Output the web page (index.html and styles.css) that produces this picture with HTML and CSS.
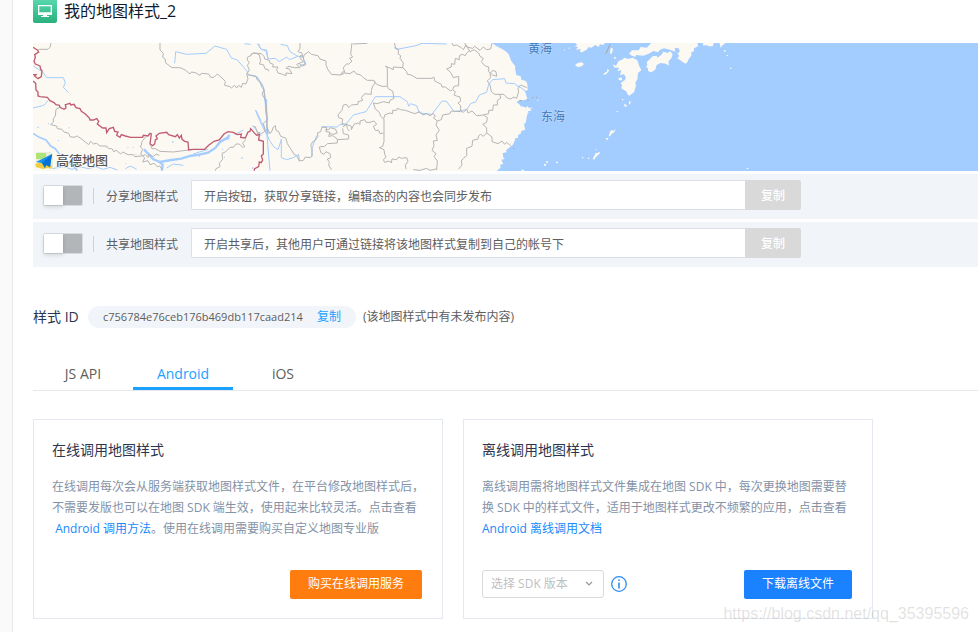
FILE: index.html
```html
<!DOCTYPE html>
<html lang="zh-CN">
<head>
<meta charset="utf-8">
<title>我的地图样式_2</title>
<link rel="stylesheet" href="styles.css">
</head>
<body>
<div class="page">
  <aside class="rail"></aside>
  <main class="main">
    <header class="title">
      <svg class="title-icon" width="24" height="24" viewBox="0 0 24 24" aria-hidden="true">
        <defs><linearGradient id="green" x1="0" y1="0" x2="0" y2="1"><stop offset="0" stop-color="#58d8b0"/><stop offset="1" stop-color="#2bb07c"/></linearGradient></defs>
        <rect width="24" height="24" rx="2" fill="url(#green)"/>
        <path d="M5 6h14v10h-5v1h2v1H8v-1h2v-1H5zM6.300 7.300v6h11.400v-6z" fill="#fff" fill-rule="evenodd"/>
      </svg>
      <h1>我的地图样式_2</h1>
    </header>

    <div class="map">
      <svg class="map-canvas" width="100%" height="128" role="img" aria-label="地图">
        <!-- land -->
        <g transform="translate(457 -8) scale(.33333)" class="land">
          <path d="M-1400 20L6 24 20 34 32 40 45 47 55 56 58 62 62 74 68 84 75 92 76 106 79 120 92 124 94 134 108 138 112 146 113 166 104 168 108 178 112 192 100 196 84 197 80 202 88 208 92 214 105 216 108 228 114 232 110 246 108 262 102 268 106 284 94 288 92 296 84 300 84 308 76 310 74 318 68 330 60 336 48 346 50 352 38 354 40 368 44 372 34 374 40 386 30 390 32 398 24 404 18 412H-1400z"/>
          <path d="M105 220L112 214 118 220 128 216 120 224 126 228 114 228 116 234 108 232z"/>
          <path d="M417 56L426 46 446 46 452 36 470 38 484 24 484 20H622L624 34 612 40 612 48 604 52 604 62 596 72 592 82 586 86 574 78 562 70 568 62 562 56 570 48 564 38 554 40 556 50 540 44 522 40 510 44 504 52 490 48 476 56 460 62 438 60 436 66 426 62z"/>
          <path d="M470 82L488 64 500 62 502 68 514 60 520 50 534 54 540 48 548 58 544 70 536 78 536 92 528 86 512 84 500 90 496 104 490 108 484 112 474 108 474 100 468 96 472 90z"/>
          <path d="M368 88L378 92 386 78 396 74 404 68 414 72 428 68 442 76 448 94 454 106 444 114 442 134 436 142 438 152 432 172 418 182 412 178 410 170 394 160 396 150 392 144 404 136 408 128 402 118 390 120 394 106 382 108 388 98 374 98z"/>
          <path d="M254 22H346L340 30 330 28 326 36 316 30 304 38 296 36 290 44 276 52 270 50 272 42 258 44 264 36 254 34 262 30zM255 90L263 84 275 82 282 87 276 93 264 97zM340 118l6-6 4-1 2-9 6 4-8 10-8 4zM360 290l6-6 4 4 8-6-6 10-8 6-4 6-4 0zM348 309h7l-2 5h-5zM308 372l6-12 3-6 6 0 4-4 3 4-8 8-6 6-3 6zM402 206l8 4v5h-6zM418 198l5 2-3 8h-4zM380 228h4v3h-4zM162 387h6v5h-6zM168 379h6v4h-6zM198 380h6v4h-6zM94 404h8v4h-8zM638 22h34l-4 12h-12l-8-4-8 2zM688 22h22l-12 8-6 8zM702 46h5v4h-5zM710 60h4v3h-4zM720 98h4v4h-4zM770 399h5v3h-5zM396 192h4v4h-4zM362 40l6-2v10l-4 10-4-4zM372 66h5v5h-5zM386 128h10v8h-10zM276 366h4v4h-4zM294 368h4v4h-4zM316 342h3v3h-3zM236 38h3v3h-3zM222 44h3v3h-3zM142 194h3v4h-3z"/>
        </g>
        <!-- rivers -->
        <g class="river" transform="translate(-33 -43) scale(.33333)">
          <path d="M99 197L112 206 128 216 140 233 190 233 196 248 190 262 206 278M99 324L124 318 134 314 144 302M524 190L527 155 560 163 618 160 645 138 680 148 694 174 712 180 740 212 745 224 768 228 790 262 798 330 804 400M734 131L752 133M772 131L784 148 800 150 804 176M766 330L780 364 800 404M757 376L784 408"/>
          <path class="mid" d="M99 400L118 412 138 420 152 438 166 446 186 474 200 484M200 484L220 498 232 512"/>
          <path class="wide" d="M486 512L488 494 478 486 514 480 544 476 570 468 598 464 624 458 646 444 660 426 684 412 688 404M688 414L668 420M480 486L460 478 432 448"/>
          <path d="M156 506L190 500 216 508 240 500 266 506 286 500 310 508 330 502 352 510M376 506L392 498 410 508M500 504L520 492 550 496M580 462L624 448M730 390L704 404"/>
        </g>
        <g class="river" transform="translate(217 -8) scale(.33333)">
          <path d="M26 26L32 42 48 48 54 72 76 70 88 80 110 66 118 74 144 64M92 28L112 32 120 50 140 62 160 68 164 88 152 90M432 38L446 42 498 32 516 25 590 27M215 275L262 276 270 268 286 270 310 240 348 230 376 185 450 185 472 200 476 214 482 206 500 212 508 234 546 238 576 198 590 199 612 230 650 224 662 206 678 200 688 180 710 172 716 148 728 134 764 131 768 144 794 146 806 156"/>
          <path d="M18 226L34 260 48 290 58 316 72 336 84 344 92 320 94 312 94 368 110 374 130 368 146 358 148 378M50 192L50 290 60 407M20 124L38 150 44 168M200 302L186 340 186 364M804 152L826 168"/>
        </g>
        <g class="speck" transform="translate(-33 -43) scale(.33333)">
          <path d="M112 380h4v4h-4zM144 370h3v3h-3zM206 382h3v3h-3zM174 420h3v3h-3zM198 396h3v3h-3zM284 428h3v3h-3zM316 440h3v3h-3zM382 442h3v3h-3zM406 462h3v3h-3zM398 440h3v3h-3zM376 490h3v3h-3zM516 424h4v4h-4zM596 466h4v4h-4zM672 470h3v3h-3zM724 472h4v4h-4zM756 502h4v4h-4zM666 446h3v3h-3zM450 418h3v3h-3z"/>
        </g>
        <!-- province borders -->
        <g class="border" transform="translate(-33 -43) scale(.33333)">
          <path d="M153 129L150 142 144 148 118 148 112 152M480 129L480 150 490 160 488 172 496 178 496 188 516 203 540 203 556 210 570 222 574 216 586 218 600 226 604 220 626 222 632 232 642 232 652 222 666 234 676 244 674 256 690 260 694 264 704 256 710 264 716 256 724 262 728 250 738 252 744 236 740 222 748 210 742 196 748 188 742 180 742 172 754 166 756 160 768 160 778 164 782 184 778 192 790 194 796 208 804 208 806 214"/>
          <path d="M180 321L168 328 166 348 160 356 160 366 152 374 170 378 172 386 186 388 192 396 206 400 210 410 222 412 232 408 246 418 256 426 266 434 272 424 280 432 290 430 300 438 320 438 326 446 336 446 342 456 348 450 362 462 368 456 384 464 400 464 404 470 424 468 436 464 444 472 448 462 460 470 468 462 478 466M438 410L426 424 424 436 420 438 428 448 422 462 434 474 428 486 444 482 450 494 462 490 472 500 480 498 486 510M452 436L456 446 466 446 480 454 520 456 566 450M738 418L728 430 734 440 728 442 718 432 708 432 700 442 690 442 676 456 666 460 668 478 658 490 660 500 648 506 646 512"/>
          <path d="M742 224L768 230 772 240 780 246 786 262 792 270 786 282 796 300 798 340 802 360 790 370 796 392 784 402 778 396 774 404 766 380 760 380"/>
        </g>
        <g class="border" transform="translate(217 -8) scale(.33333)">
          <path d="M0 62L10 54 34 56 42 64 44 72 58 76 60 84 70 88 68 96 84 96 80 104 84 114 98 118 108 122 108 114 126 116 118 102 108 100 114 94 134 98 150 98 140 88 160 80 150 70 152 60 158 66 156 54 144 50 150 40 150 24M150 86L152 94 166 90 166 82 160 72 162 60 176 50 184 58 204 62 210 72 228 78 228 90 234 104 244 118 272 120 278 110 284 112 280 98 290 86 296 88 306 78 298 70 308 66 302 58 304 40 306 24M310 27L352 25M272 120L284 114 300 116 312 108 318 116 332 120 340 128 352 136 370 136 380 148 396 154 412 154 416 162 428 168 432 190M372 136L376 142 368 154 364 166 364 178 344 176 334 188 338 196 324 200 324 208 304 210 296 218 290 208 280 210 276 226 264 240 266 248 278 252 276 266 290 268M432 190L420 196 418 204 400 200 382 206 370 204 376 222 388 232 392 244 402 252 402 280 402 320 398 334 388 338 402 344 404 358 408 366 400 374 404 382M412 154L412 98 406 94 418 98 430 104 430 96 460 98M433 24L438 42 446 44 444 56 452 62 450 70 460 84 458 97M458 97L470 110 472 118 484 120 500 130 546 130 552 126 554 138 574 148 576 156 586 156 602 168 608 164 616 170 612 180 622 184 630 186 632 198 624 204 632 212 632 228M608 164L612 154 626 152 626 124 610 128 602 112 590 102 604 96 604 86 614 88 616 70 628 74 628 62 636 58 646 62 650 54 660 46M606 24L610 32 620 30 634 38 640 44 648 30 660 50 672 44 686 54 690 64 700 70 694 80 704 92 716 96 716 110 728 120 740 124 738 110 728 106 720 116 722 128 712 138 720 150 724 170 734 178 750 178 762 178 770 188 782 192 792 186 800 190 806 170 804 160 812 150 830 158M644 24L650 36 668 40 674 34 690 46 700 36 710 44 722 42 726 24M750 180L752 190 742 196 742 210 730 210 728 226 716 226 716 236 700 240 712 248 710 262 698 268 710 278 710 294 726 306 726 320 744 326 756 318 764 328 770 322 782 332M710 294L700 304 692 298 686 302 684 312 668 316 666 334 650 340 650 362 640 370 634 378 636 390 626 402M632 228L640 232 650 222 654 234 666 228 680 242 700 240M402 250L404 240 420 234 428 236 428 226 440 226 442 220 452 224 466 226 494 236 510 230 518 240 530 236 540 242 550 236 556 244 550 248 562 258 574 254 578 240 600 236 604 228 632 230M562 258L558 270 568 286 558 300 562 316 550 318 552 332 546 346 558 356 552 364 562 378 560 404M278 276L290 268 304 274 304 284 312 268 324 264 330 268 330 258 344 254 348 262 360 262 372 258 380 268 370 274 376 286 386 286 390 296 400 294M216 276L212 290 202 294 204 304 196 316 188 320 182 332 186 340 186 364 180 368 166 366 160 376 148 378 140 362 132 358 124 344 112 326 108 310 92 304 86 290 78 286 76 272 70 276 66 288 60 296 52 280M42 166L46 190 52 250 50 270 54 298M216 276L230 278 228 290 240 292 236 304 248 302 262 312 262 324 232 326 224 334 208 336 212 352 222 358 228 350 240 356 242 368 232 372 238 382 236 390 244 404M262 314L296 312 296 300 280 296 278 280M290 270L292 280 298 288M226 284L236 284 240 278 256 282 262 294 250 298 238 296M404 382L418 378 424 384 426 372 440 374 446 366 454 370 470 368 474 380 466 390 468 402M490 404L510 406 530 400 540 406 560 402"/>
        </g>
        <!-- national border -->
        <g class="nation" transform="translate(-33 -43) scale(.33333)">
          <path d="M99 142L112 150 116 156 104 164 106 172 102 184 106 192 120 198 122 208 126 212 124 230 114 236 104 228 108 224 99 224M99 243L107 250 108 270 114 276 114 288 120 290 142 292 150 302 162 308 168 314 178 316 180 322 192 328 198 324 196 314 210 310 212 315 222 313 228 323 240 326 244 334 256 342 268 354 270 360 280 360 290 356 296 364 292 372 308 384 318 384 320 398 328 386 340 382 344 394 354 396 350 406 360 412 364 404 376 408 392 412 428 412 430 406 444 408 450 400 454 402 450 432 458 437 464 432 466 420 472 416 468 408 478 400 500 397 506 404 526 410 532 404 538 414 544 406 546 418 554 424 564 426 566 450 580 448 614 448 626 436 642 424 658 420 672 402 684 395 700 397 712 404 724 402 722 412 736 414 744 396 750 394 752 386 762 398 770 406 778 404 776 420 790 424 790 462 784 468 788 480 784 488 778 486 776 500 764 506 762 512"/>
        </g>
        <g class="isle" transform="translate(457 -8) scale(.33333)"><path d="M360 28l-12 28M112 196h4M126 188h4M138 187h4M70 340h3M88 197h8"/></g>
        <g class="sea-name"><text x="495" y="10">黄海</text><text x="508" y="78">东海</text></g>
        <!-- provider mark -->
        <g transform="translate(2 109)">
          <path d="M2 0h14l2 3v13H1V2z" fill="#e7edda"/>
          <path d="M1 1h10v6H1z" fill="#ade476"/>
          <path d="M0 12l7-2 10 4-1 3-3-1-5 1-7-2z" fill="#f4cc3c"/>
          <path d="M17 2L1 10l6 1 3 5 1-3 4 2z" fill="#1593ef"/><path d="M17 2L7 11l3 5 1-3 4 2z" fill="#0872d2"/>
          <text class="provider" x="21" y="13">高德地图</text>
        </g>
      </svg>
    </div>

    <section class="share-list">
      <div class="share">
        <input class="switch" type="checkbox" id="sw1">
        <label class="share-label" for="sw1">分享地图样式</label>
        <div class="field">
          <input type="text" readonly aria-label="分享链接" value="开启按钮，获取分享链接，编辑态的内容也会同步发布">
          <button type="button" disabled>复制</button>
        </div>
      </div>
      <div class="share">
        <input class="switch" type="checkbox" id="sw2">
        <label class="share-label" for="sw2">共享地图样式</label>
        <div class="field">
          <input type="text" readonly aria-label="共享链接" value="开启共享后，其他用户可通过链接将该地图样式复制到自己的帐号下">
          <button type="button" disabled>复制</button>
        </div>
      </div>
    </section>

    <section class="style-id">
      <span class="id-name">样式 ID</span>
      <span class="pill"><span class="id-value">c756784e76ceb176b469db117caad214</span><a href="#">复制</a></span>
      <span class="note">(该地图样式中有未发布内容)</span>
    </section>

    <nav class="tabs">
      <button type="button">JS API</button>
      <button type="button" class="active">Android</button>
      <button type="button">iOS</button>
    </nav>

    <section class="cards">
      <article class="card">
        <h2>在线调用地图样式</h2>
        <p>在线调用每次会从服务端获取地图样式文件，在平台修改地图样式后，<br>不需要发版也可以在地图 SDK 端生效，使用起来比较灵活。点击查看<br>&nbsp;<a href="#">Android 调用方法</a>。使用在线调用需要购买自定义地图专业版</p>
        <div class="actions">
          <button type="button" class="btn buy">购买在线调用服务</button>
        </div>
      </article>
      <article class="card">
        <h2>离线调用地图样式</h2>
        <p>离线调用需将地图样式文件集成在地图 SDK 中，每次更换地图需要替<br>换 SDK 中的样式文件，适用于地图样式更改不频繁的应用，点击查看<br><a href="#">Android 离线调用文档</a></p>
        <div class="actions">
          <div class="picker">
            <select aria-label="SDK 版本"><option>选择 SDK 版本</option></select>
            <svg width="8" height="6" viewBox="0 0 8 6" aria-hidden="true"><path d="M1 1l3 3 3-3" fill="none" stroke="#999" stroke-width="1.200"/></svg>
          </div>
          <svg class="info" width="16" height="16" viewBox="0 0 16 16" aria-hidden="true"><circle cx="8" cy="8" r="7.300" fill="none" stroke="#2f8cf0" stroke-width="1.300"/><path d="M7.200 3.500h1.600v1.600H7.200zM7.200 6.500h1.600v6H7.200z" fill="#2f8cf0"/></svg>
          <button type="button" class="btn download">下载离线文件</button>
        </div>
      </article>
    </section>
  </main>
  <div class="watermark">https://blog.csdn.net/qq_35395596</div>
</div>
</body>
</html>
```
FILE: styles.css
```css
* { box-sizing: border-box; }

body {
  margin: 0;
  background: #fff;
  color: #5d5d5d;
  font: 12px/20px "Open Sans", "Noto Sans CJK SC", sans-serif;
}

button, input, select { font: inherit; margin: 0; }
a { color: #1989fa; text-decoration: none; }
h1, h2, p { margin: 0; font-weight: 400; }

.page {
  position: relative;
  display: flex;
  min-height: 100vh;
  overflow: hidden;
}

.rail {
  flex: 0 0 13px;
  background: #fafafa;
  border-right: 1px solid #e8e8e8;
}

.main { flex: 1; min-width: 0; padding-left: 20px; }

.title {
  display: flex;
  align-items: center;
  gap: 7px;
  height: 43px;
  padding-bottom: 21px;
}
.title-icon { flex: none; }
.title h1 { color: #0c1a2e; font-size: 16px; line-height: 24px; }

.map { height: 128px; background: #a3ccff; }
.map-canvas { display: block; }
.land { fill: #fcf9f2; }
.river { fill: none; stroke: #a3ccff; stroke-width: 3; }
.river .mid { stroke-width: 5; }
.river .wide { stroke-width: 7; }
.speck { fill: #a3ccff; }
.border { fill: none; stroke: #b5b5b5; stroke-width: 3; }
.nation { fill: none; stroke: #c05c71; stroke-width: 4; }
.isle { fill: none; stroke: #a5a5a5; stroke-width: 3; }
.sea-name {
  fill: #3d78bd;
  stroke: #c4ddfb;
  stroke-width: 1;
  paint-order: stroke;
  font-size: 12px;
}
.provider {
  fill: #555;
  stroke: #fff;
  stroke-width: 1;
  paint-order: stroke;
  font-size: 13px;
  font-weight: 500;
}

.share-list { display: grid; gap: 3px; padding-top: 3px; }
.share {
  display: flex;
  align-items: flex-start;
  height: 45px;
  padding: 6px 10px;
  background: #f1f5fa;
}

.switch {
  appearance: none;
  flex: none;
  width: 40px;
  height: 21px;
  margin-top: 5px;
  border: 1px solid #d9dcdf;
  border-radius: 2px;
  background: #b2b6b9;
}
.switch::before {
  content: "";
  display: block;
  width: 19px;
  height: 19px;
  background: #fff;
  box-shadow: 0 2px 4px rgba(0, 0, 0, .15);
}
.switch:checked::before { margin-left: auto; }

.share-label {
  flex: none;
  margin: 8px 0 0 10px;
  padding: 1px 13px 0 12px;
  line-height: 15px;
  border-left: 1px solid #cfd2d6;
}

.field {
  display: flex;
  flex: 0 1 610px;
  height: 30px;
}
.field input {
  flex: 1;
  min-width: 0;
  padding: 3px 12px 0;
  border: 1px solid #dcdfe6;
  border-right: 0;
  border-radius: 2px 0 0 2px;
  background: #fff;
  color: #5d5d5d;
}
.field button {
  flex: 0 0 56px;
  padding: 2px 0 0;
  border: 0;
  border-radius: 0 2px 2px 0;
  background: #d9d9d9;
  color: #fff;
  font-weight: 500;
}

.style-id {
  display: flex;
  align-items: center;
  gap: 7px;
  height: 22px;
  margin-top: 39px;
}
.id-name { min-width: 48px; color: #2b3650; font-size: 14px; }
.pill {
  display: flex;
  justify-content: space-between;
  min-width: 268px;
  padding: 1px 15px;
  border-radius: 11px;
  background: #f1f5fa;
}
.id-value { font-size: 11px; }
.pill a { color: #1ba1ff; }

.tabs {
  display: flex;
  height: 33px;
  margin-top: 30px;
  border-bottom: 1px solid #e8e8e8;
}
.tabs button {
  width: 100px;
  padding: 3px 0 0;
  border: 0;
  border-bottom: 3px solid transparent;
  background: none;
  color: #5d5d5d;
  font-size: 14px;
}
.tabs .active { border-color: #1ba1ff; color: #1ba1ff; }

.cards { display: flex; flex-wrap: wrap; gap: 20px; margin-top: 28px; }
.card {
  flex: 0 1 410px;
  min-width: 0;
  height: 200px;
  padding: 20px 20px 0 18px;
  border: 1px solid #e4e9ef;
}
.card h2 { color: #2b3650; font-size: 14px; line-height: 20px; }
.card p { margin-top: 16px; color: #8492a6; line-height: 21px; white-space: nowrap; }

.actions { display: flex; align-items: center; height: 30px; margin-top: 30px; }
.btn {
  height: 29px;
  margin-left: auto;
  padding: 0 18px;
  border: 0;
  border-radius: 2px;
  color: #fff;
}
.buy { background: #ff7d0f; }
.download { background: #1a82ff; }

.picker { position: relative; width: 122px; }
.picker select {
  appearance: none;
  width: 100%;
  height: 28px;
  padding: 0 8px;
  border: 1px solid #d9d9d9;
  border-radius: 3px;
  background: #fff;
  color: #bfbfbf;
}
.picker svg { position: absolute; right: 11px; top: 11px; pointer-events: none; }
.info { margin-left: 7px; }

.watermark {
  position: absolute;
  right: 9px;
  bottom: 8px;
  color: rgba(120, 120, 120, .22);
  font: 16px/20px "Liberation Sans", sans-serif;
  pointer-events: none;
}
```
